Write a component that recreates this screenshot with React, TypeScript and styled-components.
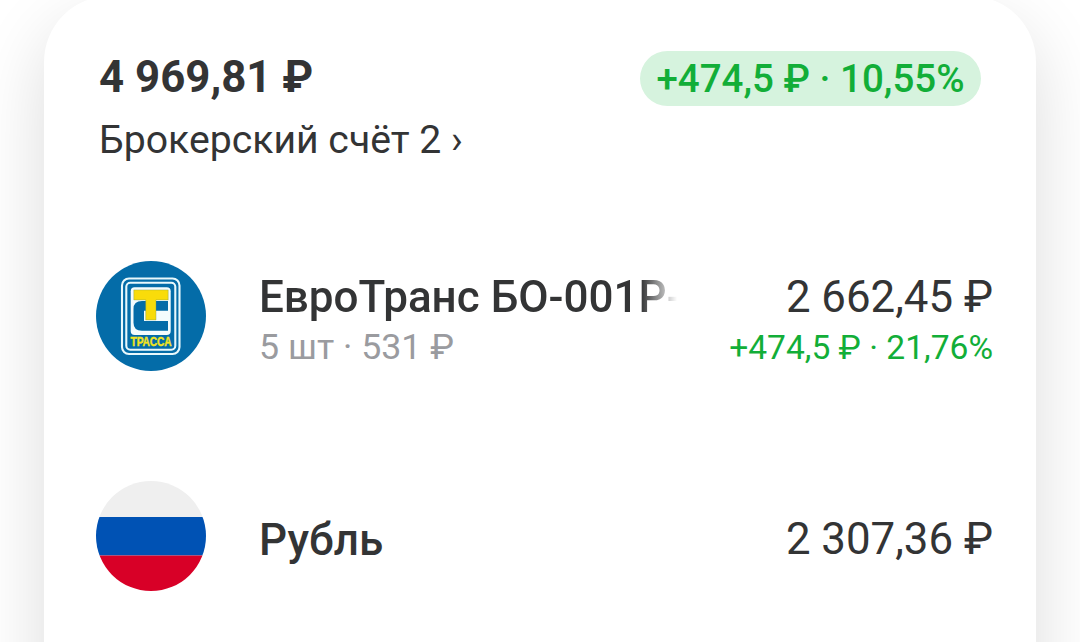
import React from "react";
import styled, { createGlobalStyle } from "styled-components";

const GlobalStyle = createGlobalStyle`
  * {
    box-sizing: border-box;
  }
  body {
    margin: 0;
    background: #fff;
    overflow: hidden;
    font-family: Roboto, "Noto Sans", sans-serif;
    color: #333435;
  }
`;

const Page = styled.main`
  height: 642px;
  padding: 0 44px;
  overflow: hidden;
`;

const Card = styled.section`
  height: 760px;
  margin-top: -4px;
  padding: 55px 43px 0 52px;
  border-radius: 66px;
  background: #fff;
  box-shadow: 0 28px 72px rgba(0, 0, 0, 0.14);
`;

const Header = styled.header`
  display: flex;
  align-items: flex-start;
  justify-content: space-between;
  height: 155px;
  padding: 0 12px 0 3px;
`;

const Total = styled.h1`
  margin: 0;
  font-size: 43.8px;
  font-weight: 700;
  line-height: 52px;
`;

const AccountLink = styled.a`
  display: block;
  margin-top: 11px;
  font-size: 39.2px;
  line-height: 52px;
`;

const ProfitBadge = styled.span`
  width: 341px;
  height: 55px;
  border-radius: 28px;
  background: #d6f3de;
  color: #12ae38;
  font-size: 38.5px;
  font-weight: 500;
  line-height: 56px;
  text-align: center;
  white-space: nowrap;
`;

const AssetList = styled.ul`
  margin: 0;
  padding: 0;
  list-style: none;
`;

const AssetRow = styled.li`
  display: flex;
  align-items: center;
  height: 220px;
`;

const Icon = styled.svg`
  flex: none;
  width: 110px;
  height: 110px;
  margin-right: 53px;
`;

const Column = styled.div<{ $right?: boolean }>`
  flex: ${({ $right }) => ($right ? "none" : "0 0 416px")};
  margin-left: ${({ $right }) => ($right ? "auto" : "0")};
  padding-top: ${({ $right }) => ($right ? "5px" : "7px")};
  text-align: ${({ $right }) => ($right ? "right" : "left")};
  white-space: nowrap;
`;

const Name = styled.div<{ $fade?: boolean }>`
  overflow: hidden;
  font-size: 44px;
  font-weight: 500;
  line-height: 52px;
  ${({ $fade }) =>
    $fade && "mask-image: linear-gradient(to right, #000 382px, transparent 418px);"}
`;

const Amount = styled.div`
  font-size: 43.8px;
  line-height: 52px;
`;

const Details = styled.div`
  margin-bottom: -3px;
  font-size: 35.75px;
  line-height: 48px;
  color: #9a9b9f;
`;

const Profit = styled.div`
  margin-bottom: -6px;
  font-size: 33.6px;
  line-height: 50px;
  color: #12ae38;
`;

const LogoText = styled.text`
  font-family: "Liberation Sans", Arial, sans-serif;
  font-size: 12px;
  font-weight: 700;
  fill: #f3e51d;
  stroke: #f3e51d;
  stroke-width: 0.4px;
`;

const TrassaLogo = () => (
  <Icon viewBox="0 0 110 110">
    <circle cx="55" cy="55" r="55" fill="#046ca8" />
    <g fill="none" stroke="#e8f8fc" strokeWidth="2.1">
      <rect x="26" y="17.5" width="57.5" height="75.5" rx="7" />
      <rect x="30.3" y="21.8" width="49" height="67" rx="4" />
    </g>
    <rect x="34.7" y="26.3" width="40" height="47.7" rx="4" fill="#f4fcfd" />
    <path d="M72 40H46q-8.5 0-8.5 8v13.7q0 8 8.5 8h26V60H48V49.7h24z" fill="#046ca8" />
    <path
      d="M37.8 28.9h34.4v10H60v20H49.7V38.9H37.8z"
      fill="#f9dc0a"
      stroke="#7f9a52"
      strokeWidth="0.4"
    />
    <LogoText x="34.5" y="85" textLength="41" lengthAdjust="spacingAndGlyphs">
      ТРАССА
    </LogoText>
  </Icon>
);

const RubleFlag = () => (
  <Icon viewBox="0 0 110 110">
    <clipPath id="flag">
      <circle cx="55" cy="55" r="55" />
    </clipPath>
    <g clipPath="url(#flag)">
      <rect width="110" height="36" fill="#efefef" />
      <rect y="36" width="110" height="38.5" fill="#0052b4" />
      <rect y="74.5" width="110" height="36" fill="#d80027" />
    </g>
  </Icon>
);

const App: React.FC = () => {
  return (
    <Page>
      <GlobalStyle />
      <Card>
        <Header>
          <div>
            <Total>4 969,81 ₽</Total>
            <AccountLink>Брокерский счёт 2 ›</AccountLink>
          </div>
          <ProfitBadge>+474,5 ₽ · 10,55%</ProfitBadge>
        </Header>
        <AssetList>
          <AssetRow>
            <TrassaLogo />
            <Column>
              <Name $fade>ЕвроТранс БО-001Р-</Name>
              <Details>5 шт · 531 ₽</Details>
            </Column>
            <Column $right>
              <Amount>2 662,45 ₽</Amount>
              <Profit>+474,5 ₽ · 21,76%</Profit>
            </Column>
          </AssetRow>
          <AssetRow>
            <RubleFlag />
            <Column>
              <Name>Рубль</Name>
            </Column>
            <Column $right>
              <Amount>2 307,36 ₽</Amount>
            </Column>
          </AssetRow>
        </AssetList>
      </Card>
    </Page>
  );
};

export default App;
